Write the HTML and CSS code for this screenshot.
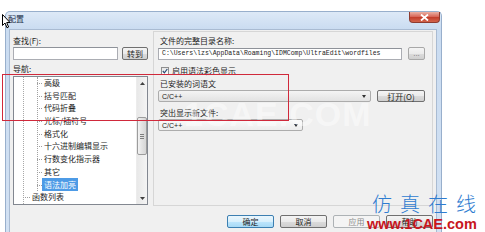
FILE: index.html
```html
<!DOCTYPE html>
<html>
<head>
<meta charset="utf-8">
<link rel="stylesheet" href="styles.css">
</head>
<body>
<div class="window">
  <div class="titlebar">
    <span class="title">配置</span>
    <span class="close"><svg width="9" height="7" viewBox="0 0 9 7"><path d="M1 0.5 L8 6.5 M8 0.5 L1 6.5" stroke="#fff" stroke-width="1.8"/></svg></span>
  </div>
  <div class="client">
    <div class="main">
      <div class="left">
        <div class="lbl">查找(F):</div>
        <div class="findrow">
          <div class="input find"></div>
          <div class="btn go">转到</div>
        </div>
        <div class="lbl nav">导航:</div>
        <div class="listbox">
          <div class="tree">
            <div class="trunk">
              <div class="branch">
                <div class="item">高级</div>
                <div class="item">括号匹配</div>
                <div class="item">代码折叠</div>
                <div class="item">光标/插符号</div>
                <div class="item">格式化</div>
                <div class="item">十六进制编辑显示</div>
                <div class="item">行数变化指示器</div>
                <div class="item">其它</div>
                <div class="item"><span class="sel">语法加亮</span></div>
              </div>
              <div class="item top">函数列表</div>
            </div>
          </div>
          <div class="vscroll">
            <div class="sb-btn"><svg width="5" height="3" viewBox="0 0 5 3"><path d="M0 3 L2.5 0 L5 3 Z" fill="#404040"/></svg></div>
            <div class="sb-thumb"><span class="grip"></span></div>
            <div class="sb-space"></div>
            <div class="sb-btn"><svg width="5" height="3" viewBox="0 0 5 3"><path d="M0 0 L2.5 3 L5 0 Z" fill="#404040"/></svg></div>
          </div>
        </div>
      </div>
      <div class="right">
        <div class="rlbl">文件的完整目录名称:</div>
        <div class="pathrow">
          <div class="input path">C:\Users\lzs\AppData\Roaming\IDMComp\UltraEdit\wordfiles</div>
          <div class="btn dots">...</div>
        </div>
        <div class="checkrow">
          <span class="checkbox"><svg width="6" height="6" viewBox="0 0 6 6"><path d="M0.8 3 L2.4 4.8 L5.3 1" stroke="#2b4b74" stroke-width="1.2" fill="none"/></svg></span>
          <span>启用语法彩色显示</span>
        </div>
        <div class="rlbl r2">已安装的词语文</div>
        <div class="comborow">
          <div class="combo c1"><span>C/C++</span><span class="arrow"></span></div>
          <div class="btn open">打开(O)</div>
        </div>
        <div class="rlbl r3">突出显示新文件:</div>
        <div class="combo c2"><span>C/C++</span><span class="arrow"></span></div>
      </div>
    </div>
    <div class="buttons">
      <div class="btn dlg default">确定</div>
      <div class="btn dlg">取消</div>
      <div class="btn dlg disabled">应用</div>
      <div class="btn dlg">帮助</div>
    </div>
  </div>
</div>
<div class="wm-bg">1CAE.COM</div>
<div class="redbox"></div>
<div class="wm-cn">仿真在线</div>
<div class="wm-en">www.1CAE.com</div>
<svg class="cursor" width="9" height="15" viewBox="0 0 9 15"><path d="M0.5 0.5 L0.5 11.5 L3 9 L5 13.8 L6.6 13 L4.7 8.5 L8 8.5 Z" fill="#fff" stroke="#000" stroke-width="1"/></svg>
</body>
</html>
```
FILE: styles.css
```css
* { box-sizing: border-box; }
html, body { margin: 0; padding: 0; }
body {
  width: 485px;
  height: 232px;
  overflow: hidden;
  background: #fff;
  position: relative;
  font-family: "Noto Sans CJK SC", "Liberation Sans", sans-serif;
  font-size: 8px;
  color: #1e1e1e;
}
.window {
  margin: 11px 0 0 5px;
  width: 437px;
  height: 221px;
  border: 1px solid #98afcc;
  border-bottom: 0;
  border-radius: 5px 5px 0 0;
  background: linear-gradient(to bottom, #dde9f7 0, #cadcf1 17px, #d2e1f3 100%);
  display: flex;
  flex-direction: column;
}
.titlebar {
  height: 17px;
  display: flex;
  justify-content: space-between;
  align-items: flex-start;
  padding-left: 2px;
}
.title {
  line-height: 13px;
  font-size: 8px;
  color: #1b2f4a;
}
.close {
  width: 31px;
  height: 11px;
  margin-right: 1px;
  border: 1px solid #8e3b2f;
  border-top: 0;
  border-radius: 0 0 4px 4px;
  background: linear-gradient(to bottom, #eab1a4 0, #d8695a 45%, #c33f2c 55%, #d2644c 100%);
  display: flex;
  align-items: center;
  justify-content: center;
}
.client {
  flex: 1;
  margin: 0 4px 0 3px;
  background: #f0f0f0;
  border: 1px solid #a9bbd2;
  border-bottom: 0;
  display: flex;
  flex-direction: column;
}
.main {
  display: flex;
  padding-left: 3px;
}
.left {
  width: 135px;
  padding-top: 4px;
}
.lbl {
  height: 13px;
  line-height: 13px;
}
.lbl.nav {
  margin-top: 2px;
}
.findrow {
  display: flex;
  gap: 4px;
  height: 13px;
}
.input {
  background: #fff;
  border: 1px solid #abadb3;
  border-top-color: #8e9299;
}
.input.find {
  width: 105px;
  height: 13px;
}
.btn {
  height: 13px;
  border: 1px solid #707070;
  border-radius: 2px;
  background: linear-gradient(to bottom, #f4f4f4 0, #ebebeb 50%, #dcdcdc 51%, #cfcfcf 100%);
  display: flex;
  align-items: center;
  justify-content: center;
  font-size: 8px;
  line-height: 11px;
  color: #1e1e1e;
}
.btn.go { width: 26px; }
.listbox {
  margin-top: 1px;
  height: 129px;
  border: 1px solid #828790;
  background: #fff;
  display: flex;
  overflow: hidden;
}
.tree {
  flex: 1;
  overflow: hidden;
}
.trunk {
  margin-left: 9px;
  border-left: 1px dotted #a8a8a8;
}
.branch {
  margin-left: 13px;
  border-left: 1px dotted #a0a0a0;
}
.item {
  position: relative;
  height: 12.7px;
  line-height: 12.7px;
  padding-left: 6px;
  white-space: nowrap;
  color: #1e1e1e;
}
.item::before {
  content: "";
  position: absolute;
  left: -1px;
  top: 6px;
  width: 5px;
  border-top: 1px dotted #a0a0a0;
}
.item.top {
  padding-left: 8px;
}
.item.top::before {
  width: 7px;
}
.sel {
  background: #4d9be6;
  color: #fff;
  padding: 1px 2px;
  margin-left: -2px;
}
.vscroll {
  width: 11px;
  background: linear-gradient(to right, #e8e8e8, #f4f4f4);
  border-left: 1px solid #ececec;
  display: flex;
  flex-direction: column;
}
.sb-btn {
  height: 12px;
  display: flex;
  align-items: center;
  justify-content: center;
}
.sb-thumb {
  margin-top: 28px;
  height: 38px;
  border: 1px solid #9c9c9c;
  border-radius: 2px;
  background: linear-gradient(to right, #f3f3f3, #e2e2e2 50%, #d6d6d6);
  display: flex;
  align-items: center;
  justify-content: center;
}
.grip {
  width: 4px;
  height: 5px;
  border-top: 1px solid #7d7d7d;
  border-bottom: 1px solid #7d7d7d;
  background: linear-gradient(to bottom, transparent 1px, #7d7d7d 1px, #7d7d7d 2px, transparent 2px);
}
.sb-space { flex: 1; }
.right {
  width: 280px;
  margin-left: 5px;
  margin-top: 1px;
  height: 175px;
  border: 1px solid #d6d6d6;
  padding: 3px 0 0 4px;
}
.rlbl {
  height: 12px;
  line-height: 12px;
  padding-left: 2px;
}
.rlbl.r2 { margin-top: 1px; }
.rlbl.r3 { margin-top: 5px; }
.pathrow {
  display: flex;
  align-items: center;
  height: 13px;
}
.input.path {
  width: 244px;
  height: 12px;
  font-family: "Liberation Mono", monospace;
  font-size: 6.5px;
  line-height: 10px;
  padding-left: 3px;
  white-space: nowrap;
  overflow: hidden;
  color: #222;
}
.btn.dots {
  margin-left: 6px;
  width: 17px;
  border-color: #a8a8a8;
  color: #777;
  font-family: "Liberation Sans", sans-serif;
}
.checkrow {
  margin-top: 4px;
  height: 13px;
  display: flex;
  align-items: center;
  gap: 3px;
  padding-left: 3px;
}
.checkbox {
  width: 8px;
  height: 8px;
  border: 1px solid #8f8f8f;
  background: linear-gradient(#e6e6e6, #fff);
  display: flex;
  align-items: center;
  justify-content: center;
}
.comborow {
  display: flex;
  align-items: center;
  height: 12px;
}
.combo {
  height: 12px;
  border: 1px solid #acacac;
  border-radius: 2px;
  background: linear-gradient(to bottom, #f4f4f4, #e2e2e2);
  display: flex;
  align-items: center;
  justify-content: space-between;
  padding: 0 4px 0 3px;
  font-family: "Liberation Sans", sans-serif;
  font-size: 7px;
  color: #222;
}
.combo.c1 { width: 213px; }
.combo.c2 {
  width: 145px;
  background: linear-gradient(to bottom, #fafafa, #ececec);
}
.arrow {
  width: 0;
  height: 0;
  border-left: 2.5px solid transparent;
  border-right: 2.5px solid transparent;
  border-top: 3px solid #303030;
}
.btn.open {
  margin-left: 6px;
  width: 48px;
  height: 12px;
}
.buttons {
  display: flex;
  justify-content: flex-end;
  gap: 6px;
  padding-right: 3px;
  margin-top: 9px;
}
.btn.dlg { width: 47px; }
.btn.default {
  border-color: #3c7fb1;
  background: linear-gradient(to bottom, #eaf6fd 0, #d9f0fc 50%, #bee6fd 51%, #a7d9f5 100%);
}
.btn.disabled {
  border-color: #adb2b5;
  color: #8a8a8a;
  background: #f4f4f4;
}
.wm-bg {
  position: absolute;
  left: 184px;
  top: 96px;
  font-family: "Liberation Sans", sans-serif;
  font-weight: bold;
  font-size: 34px;
  line-height: 36px;
  color: rgba(255, 255, 255, 0.45);
  letter-spacing: 1px;
}
.redbox {
  position: absolute;
  left: 2px;
  top: 74px;
  width: 287px;
  height: 47px;
  border: 1px solid #d0293b;
}
.wm-cn {
  position: absolute;
  left: 372px;
  top: 192px;
  font-size: 20px;
  line-height: 24px;
  letter-spacing: 8px;
  color: #2e7cd0;
  font-weight: 300;
}
.wm-en {
  position: absolute;
  left: 367px;
  top: 216px;
  font-family: "Liberation Sans", sans-serif;
  font-weight: bold;
  font-size: 14.5px;
  line-height: 16px;
  color: #c7161e;
}
.cursor {
  position: absolute;
  left: 2px;
  top: 14px;
}
```
